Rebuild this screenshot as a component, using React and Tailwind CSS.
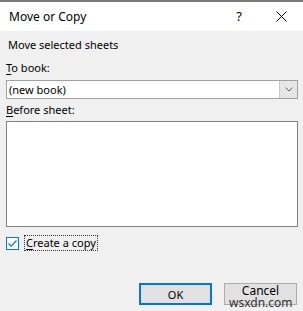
export default function App() {
  return (
    <div
      className="relative w-[303px] h-[311px] bg-[#f0f0f0] text-[11px] text-black overflow-hidden"
      style={{ fontFamily: '"Noto Sans", "Open Sans", sans-serif' }}
    >
      {/* title bar */}
      <div className="h-[31px] bg-white border-t-[2px] border-[#7a7a7a] flex items-center pl-[9px] text-[12px]">
        <span className="flex-1 leading-none pt-[1px]">Move or Copy</span>
        <span className="w-[20px] text-center text-[13px] mr-[27px]">?</span>
        <svg width="11" height="11" viewBox="0 0 11 11" className="mr-[16px]">
          <path d="M0.5 0.5 L10.5 10.5 M10.5 0.5 L0.5 10.5" stroke="#000" strokeWidth="1" />
        </svg>
      </div>

      <div className="flex flex-col px-[6px]">
        <div className="pl-[2px] pt-[6px] leading-[16px]">Move selected sheets</div>

        <div className="pt-[7px] leading-[16px]">
          <span className="underline underline-offset-2">T</span>o book:
        </div>
        <div className="mt-[4px] h-[19px] w-[292px] bg-white border border-[#a0a0a0] flex items-stretch">
          <span className="flex-1 pl-[2px] leading-[17px]">(new book)</span>
          <div className="w-[18px] bg-[#e6e6e6] border-l border-[#c8c8c8] flex items-center justify-center">
            <svg width="8" height="5" viewBox="0 0 8 5">
              <path d="M0.5 0.5 L4 4 L7.5 0.5" stroke="#606060" fill="none" strokeWidth="1" />
            </svg>
          </div>
        </div>

        <div className="pt-[3px] leading-[16px]">
          <span className="underline underline-offset-2">B</span>efore sheet:
        </div>
        <div className="mt-[3px] h-[106px] w-[292px] bg-white border border-[#828282]" />

        <div className="mt-[8px] flex items-center gap-[5px]">
          <div className="w-[13px] h-[13px] border border-[#0078d7] bg-white flex items-center justify-center">
            <svg width="11" height="11" viewBox="0 0 11 11">
              <path d="M1.5 5.5 L4.2 8.2 L9.5 2.5" stroke="#0078d7" fill="none" strokeWidth="1.2" />
            </svg>
          </div>
          <div className="border border-dotted border-[#333] px-[1px] leading-[14px]">
            <span className="underline underline-offset-2">C</span>reate a copy
          </div>
        </div>

        <div className="mt-[32px] flex justify-end gap-[12px]">
          <button className="w-[73px] h-[22px] border-[2px] border-[#0078d7] bg-[#e1e1e1] leading-none">OK</button>
          <button className="w-[73px] h-[22px] border border-[#adadad] bg-[#e1e1e1] leading-none pb-[7px] text-[12px]">Cancel</button>
        </div>
      </div>

      <span className="absolute left-[229px] top-[297px] text-[12px] text-[#333] leading-none">wsxdn.com</span>
    </div>
  );
}
